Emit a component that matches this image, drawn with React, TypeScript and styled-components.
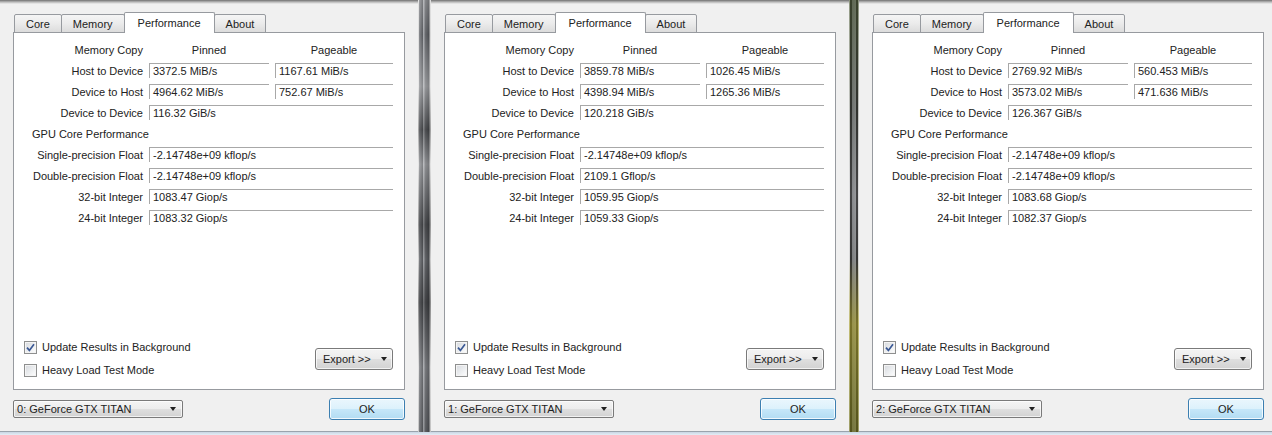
import React from "react";
import styled, { createGlobalStyle } from "styled-components";

// Types
type Reading = {
  label: string;
  pinned: string;
  pageable?: string;
};

type CoreResult = {
  label: string;
  value: string;
};

type Device = {
  index: number;
  width: number;
  copies: Reading[];
  core: CoreResult[];
};

const devices: Device[] = [
  {
    index: 0,
    width: 418,
    copies: [
      { label: "Host to Device", pinned: "3372.5 MiB/s", pageable: "1167.61 MiB/s" },
      { label: "Device to Host", pinned: "4964.62 MiB/s", pageable: "752.67 MiB/s" },
      { label: "Device to Device", pinned: "116.32 GiB/s" },
    ],
    core: [
      { label: "Single-precision Float", value: "-2.14748e+09 kflop/s" },
      { label: "Double-precision Float", value: "-2.14748e+09 kflop/s" },
      { label: "32-bit Integer", value: "1083.47 Giop/s" },
      { label: "24-bit Integer", value: "1083.32 Giop/s" },
    ],
  },
  {
    index: 1,
    width: 418,
    copies: [
      { label: "Host to Device", pinned: "3859.78 MiB/s", pageable: "1026.45 MiB/s" },
      { label: "Device to Host", pinned: "4398.94 MiB/s", pageable: "1265.36 MiB/s" },
      { label: "Device to Device", pinned: "120.218 GiB/s" },
    ],
    core: [
      { label: "Single-precision Float", value: "-2.14748e+09 kflop/s" },
      { label: "Double-precision Float", value: "2109.1 Gflop/s" },
      { label: "32-bit Integer", value: "1059.95 Giop/s" },
      { label: "24-bit Integer", value: "1059.33 Giop/s" },
    ],
  },
  {
    index: 2,
    width: 413,
    copies: [
      { label: "Host to Device", pinned: "2769.92 MiB/s", pageable: "560.453 MiB/s" },
      { label: "Device to Host", pinned: "3573.02 MiB/s", pageable: "471.636 MiB/s" },
      { label: "Device to Device", pinned: "126.367 GiB/s" },
    ],
    core: [
      { label: "Single-precision Float", value: "-2.14748e+09 kflop/s" },
      { label: "Double-precision Float", value: "-2.14748e+09 kflop/s" },
      { label: "32-bit Integer", value: "1083.68 Giop/s" },
      { label: "24-bit Integer", value: "1082.37 Giop/s" },
    ],
  },
];

const tabs = ["Core", "Memory", "Performance", "About"];

// Styles
const GlobalStyle = createGlobalStyle`
  html, body {
    margin: 0;
    padding: 0;
    background: #dfe9f3;
    overflow: hidden;
  }
  * {
    box-sizing: border-box;
  }
`;

const Screen = styled.div`
  width: 1272px;
  height: 435px;
  display: flex;
  flex-direction: column;
  font-family: "Liberation Sans", Arial, sans-serif;
  font-size: 11px;
  color: #222;
`;

const Desktop = styled.div`
  display: flex;
  height: 432px;
`;

const TaskbarEdge = styled.div`
  height: 3px;
  background: linear-gradient(#c9d6e3, #e4edf6);
`;

const Window = styled.div<{ $width: number }>`
  flex: none;
  width: ${p => p.$width}px;
  height: 432px;
  padding: 12px 0 0 13px;
  background: linear-gradient(#707070 0, #b8b8b8 2px, #f0f0f0 4px) #f0f0f0;
  border-bottom: 1px solid #9aa3ad;
`;

const Frame = styled.div<{ $tone: "gray" | "olive" }>`
  flex: none;
  width: ${p => (p.$tone === "gray" ? 13 : 10)}px;
  height: 432px;
  background: ${p =>
    p.$tone === "gray"
      ? `linear-gradient(to bottom, rgba(255,255,255,0.2) 0%, rgba(0,0,0,0) 8%, rgba(255,255,255,0.3) 20%, rgba(0,0,0,0.25) 30%, rgba(255,255,255,0.25) 38%, rgba(0,0,0,0.3) 52%, rgba(0,0,0,0.05) 60%, rgba(0,0,0,0.35) 70%, rgba(255,255,255,0.1) 85%, rgba(0,0,0,0.1) 100%),
         linear-gradient(to right, #dedede 0, #dedede 1px, #8a8c90 1px, #55575b 5px, #a4a6aa 5px, #a4a6aa 6px, #6a6c70 7px, #4a4c50 11px, #c8c8c8 12px, #e8e8e8 13px)`
      : `linear-gradient(to bottom, rgba(70,85,45,0.55) 0%, rgba(60,70,50,0.2) 25%, rgba(200,200,210,0.15) 45%, rgba(120,120,120,0.1) 60%, rgba(170,160,40,0.6) 75%, rgba(110,110,20,0.6) 100%),
         linear-gradient(to right, #e6e6e6 0, #e6e6e6 1px, #2c2c2c 1px, #2c2c2c 3px, #7c7e80 3px, #8e9092 7px, #2c2c2c 7px, #2c2c2c 9px, #e2e2e2 9px)`};
`;

const TabBar = styled.div`
  display: flex;
  align-items: flex-end;
  height: 21px;
  padding-left: 1px;
  margin-bottom: -1px;
  position: relative;
  z-index: 1;
`;

const Tab = styled.div<{ $active?: boolean }>`
  position: relative;
  z-index: ${p => (p.$active ? 2 : 1)};
  display: flex;
  align-items: center;
  height: ${p => (p.$active ? 21 : 19)}px;
  padding: ${p => (p.$active ? "0 13px 1px" : "1px 11px 0")};
  margin-left: -1px;
  border: 1px solid #979a9f;
  border-bottom: ${p => (p.$active ? "none" : "1px solid #979a9f")};
  border-radius: 2px 2px 0 0;
  background: ${p =>
    p.$active ? "#ffffff" : "linear-gradient(#f5f5f5, #ebebeb 50%, #dcdcdc)"};
  white-space: nowrap;
  &:first-child {
    margin-left: 0;
  }
`;

const Pane = styled.div`
  width: 392px;
  height: 358px;
  display: flex;
  flex-direction: column;
  padding: 9px 11px 10px 10px;
  background: #ffffff;
  border: 1px solid #979a9f;
`;

const Results = styled.div`
  display: grid;
  grid-template-columns: 111px 120px 118px;
  grid-auto-rows: 15px;
  column-gap: 6px;
  row-gap: 6px;
  margin-left: 8px;
`;

const Label = styled.div`
  display: flex;
  align-items: center;
  justify-content: flex-end;
  white-space: nowrap;
`;

const ColumnHead = styled.div`
  display: flex;
  align-items: center;
  justify-content: center;
`;

const Section = styled.div`
  grid-column: 1 / -1;
  display: flex;
  align-items: center;
`;

const Value = styled.div<{ $wide?: boolean }>`
  grid-column: ${p => (p.$wide ? "2 / 4" : "auto")};
  display: flex;
  align-items: center;
  padding-left: 3px;
  border-top: 1px solid #a8a8a8;
  border-left: 1px solid #a8a8a8;
  white-space: nowrap;
`;

const Spacer = styled.div`
  flex: 1;
`;

const Footer = styled.div`
  display: flex;
  align-items: center;
  justify-content: space-between;
`;

const Options = styled.div`
  display: flex;
  flex-direction: column;
  gap: 5px;
`;

const Option = styled.label`
  display: flex;
  align-items: center;
  gap: 5px;
  height: 18px;
`;

const Box = styled.span`
  flex: none;
  width: 13px;
  height: 13px;
  display: flex;
  align-items: center;
  justify-content: center;
  border: 1px solid #8e8f8f;
  background: linear-gradient(135deg, #d6d9de 0%, #eceef0 55%, #ffffff 100%);
  box-shadow: inset 0 0 0 1px #f4f4f4;
`;

const Caret = styled.span`
  width: 0;
  height: 0;
  border-left: 3.5px solid transparent;
  border-right: 3.5px solid transparent;
  border-top: 4px solid #202020;
`;

const DropButton = styled.div<{ $width: number; $height: number }>`
  display: flex;
  align-items: center;
  justify-content: space-between;
  width: ${p => p.$width}px;
  height: ${p => p.$height}px;
  border: 1px solid #7a7a7a;
  border-radius: 3px;
  background: linear-gradient(#f4f4f4 0%, #ececec 50%, #dfdfdf 50%, #d2d2d2 100%);
  box-shadow: inset 0 0 0 1px rgba(255, 255, 255, 0.7);
  white-space: nowrap;
`;

const ExportButton = styled(DropButton)`
  padding: 0 5px 0 7px;
`;

const DeviceSelect = styled(DropButton)`
  border-radius: 2px;
  padding: 0 6px 0 3px;
`;

const ButtonRow = styled.div`
  display: flex;
  align-items: center;
  justify-content: space-between;
  width: 392px;
  height: 22px;
  margin-top: 8px;
`;

const OkButton = styled.div`
  display: flex;
  align-items: center;
  justify-content: center;
  width: 76px;
  height: 22px;
  border: 1px solid #3c7fb1;
  border-radius: 3px;
  background: linear-gradient(#eaf6fd 0%, #dcf1fc 50%, #c6e7f9 50%, #b2dcf3 100%);
  box-shadow: inset 0 0 0 1px rgba(255, 255, 255, 0.8);
`;

const Check = ({ checked }: { checked?: boolean }) => (
  <Box>
    {checked && (
      <svg width="9" height="9" viewBox="0 0 9 9">
        <path d="M1 4.6 L3.4 7.4 L8 1.2" stroke="#3a5894" strokeWidth="1.7" fill="none" />
      </svg>
    )}
  </Box>
);

const Performance = ({ device }: { device: Device }) => (
  <Window $width={device.width}>
    <TabBar>
      {tabs.map(t => (
        <Tab key={t} $active={t === "Performance"}>{t}</Tab>
      ))}
    </TabBar>
    <Pane>
      <Results>
        <Label>Memory Copy</Label>
        <ColumnHead>Pinned</ColumnHead>
        <ColumnHead>Pageable</ColumnHead>
        {device.copies.map(r => (
          <React.Fragment key={r.label}>
            <Label>{r.label}</Label>
            <Value $wide={!r.pageable}>{r.pinned}</Value>
            {r.pageable && <Value>{r.pageable}</Value>}
          </React.Fragment>
        ))}
        <Section>GPU Core Performance</Section>
        {device.core.map(r => (
          <React.Fragment key={r.label}>
            <Label>{r.label}</Label>
            <Value $wide>{r.value}</Value>
          </React.Fragment>
        ))}
      </Results>
      <Spacer />
      <Footer>
        <Options>
          <Option>
            <Check checked />
            Update Results in Background
          </Option>
          <Option>
            <Check />
            Heavy Load Test Mode
          </Option>
        </Options>
        <ExportButton $width={78} $height={22}>
          Export &gt;&gt;
          <Caret />
        </ExportButton>
      </Footer>
    </Pane>
    <ButtonRow>
      <DeviceSelect $width={170} $height={18}>
        {device.index}: GeForce GTX TITAN
        <Caret />
      </DeviceSelect>
      <OkButton>OK</OkButton>
    </ButtonRow>
  </Window>
);

const App = () => (
  <>
    <GlobalStyle />
    <Screen>
      <Desktop>
        <Performance device={devices[0]} />
        <Frame $tone="gray" />
        <Performance device={devices[1]} />
        <Frame $tone="olive" />
        <Performance device={devices[2]} />
      </Desktop>
      <TaskbarEdge />
    </Screen>
  </>
);

export default App;
